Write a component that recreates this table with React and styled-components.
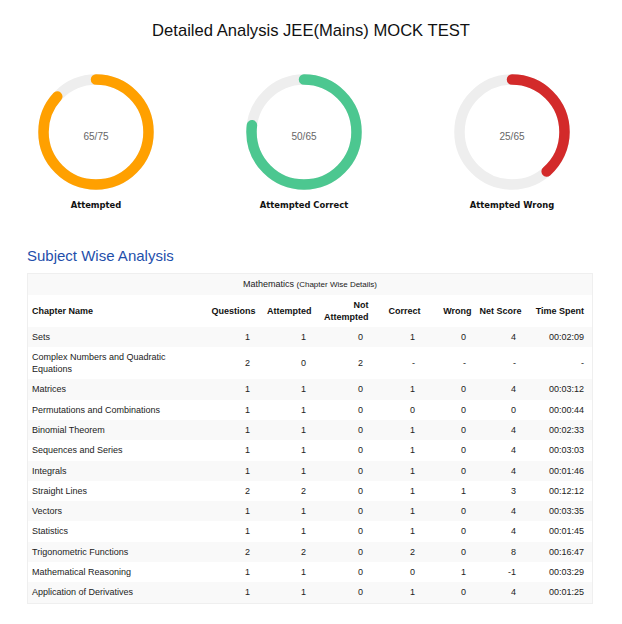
import React from "react";
import styled, { createGlobalStyle } from "styled-components";

const GlobalStyle = createGlobalStyle`
  html, body { margin: 0; padding: 0; background: #fff; }
  body { font-family: "Liberation Sans", Arial, Helvetica, sans-serif; color: #222; }
`;

const Page = styled.div`
  padding-top: 21px;
  padding-bottom: 20px;
`;

const Title = styled.h1`
  margin: 0;
  font-size: 16.6px;
  line-height: 20px;
  font-weight: normal;
  text-align: center;
  color: #111;
`;

const ChartRow = styled.div`
  display: flex;
  gap: 92px;
  padding-left: 38px;
  margin-top: 32.5px;
`;

const Figure = styled.div`
  width: 116px;
  display: flex;
  flex-direction: column;
  align-items: center;
`;

const RingWrap = styled.div`
  position: relative;
  width: 116px;
  height: 116px;
`;

const CenterText = styled.span`
  position: absolute;
  left: 0;
  right: 0;
  top: 50%;
  transform: translateY(calc(-50% + 5px));
  text-align: center;
  font-size: 10px;
  line-height: 12px;
  color: #666;
`;

const Label = styled.div`
  margin-top: 10px;
  font-family: "DejaVu Sans", Verdana, sans-serif;
  font-weight: bold;
  font-size: 8.4px;
  line-height: 11px;
  color: #111;
  white-space: nowrap;
`;

const Section = styled.section`
  padding: 0 30px 0 27px;
  margin-top: 36px;
`;

const Heading = styled.h2`
  margin: 0 0 8px;
  font-size: 15px;
  line-height: 18px;
  font-weight: normal;
  color: #1f4fab;
`;

const Table = styled.table`
  width: 100%;
  border-collapse: collapse;
  table-layout: fixed;
  border: 1px solid #efefef;
  font-size: 9px;
`;

const Col = styled.col`
  width: ${(p) => p.$w}px;
`;

const CaptionCell = styled.td`
  background: #f9f9f9;
  text-align: center;
  padding: 4px;
  line-height: 12px;
  color: #222;
`;

const Small = styled.small`
  font-size: 8px;
`;

const Th = styled.th`
  padding: 4px ${(p) => (p.$last ? 8 : 4)}px 4px ${(p) => (p.$align === "left" ? 4 : 1)}px;
  line-height: 12px;
  font-weight: bold;
  color: #111;
  text-align: ${(p) => p.$align || "right"};
  vertical-align: middle;
  background: #fff;
`;

const BodyRow = styled.tr`
  &:nth-child(odd) {
    background: #f9f9f9;
  }
`;

const Td = styled.td`
  padding: 4px ${(p) => (p.$name ? 4 : p.$last ? 8 : 9.5)}px 4px 4px;
  line-height: 12.3px;
  color: #222;
  text-align: ${(p) => (p.$name ? "left" : "right")};
  vertical-align: middle;
`;

const R = 52.5;
const C = 2 * Math.PI * R;

function Donut({ value, total, color, label }) {
  const len = (value / total) * C;
  return (
    <Figure>
      <RingWrap>
        <svg width="116" height="116" viewBox="0 0 116 116">
          <circle cx="58" cy="58" r={R} fill="none" stroke="#eeeeee" strokeWidth="10.5" />
          <circle
            cx="58"
            cy="58"
            r={R}
            fill="none"
            stroke={color}
            strokeWidth="10.5"
            strokeLinecap="round"
            strokeDasharray={`${len} ${C}`}
            transform="rotate(-90 58 58)"
          />
        </svg>
        <CenterText>
          {value}/{total}
        </CenterText>
      </RingWrap>
      <Label>{label}</Label>
    </Figure>
  );
}

const widths = [180, 52, 56, 57, 52, 51, 50, 67];
const headers = ["Questions", "Attempted", "Not Attempted", "Correct", "Wrong", "Net Score", "Time Spent"];

const rows = [
  ["Sets", "1", "1", "0", "1", "0", "4", "00:02:09"],
  ["Complex Numbers and Quadratic Equations", "2", "0", "2", "-", "-", "-", "-"],
  ["Matrices", "1", "1", "0", "1", "0", "4", "00:03:12"],
  ["Permutations and Combinations", "1", "1", "0", "0", "0", "0", "00:00:44"],
  ["Binomial Theorem", "1", "1", "0", "1", "0", "4", "00:02:33"],
  ["Sequences and Series", "1", "1", "0", "1", "0", "4", "00:03:03"],
  ["Integrals", "1", "1", "0", "1", "0", "4", "00:01:46"],
  ["Straight Lines", "2", "2", "0", "1", "1", "3", "00:12:12"],
  ["Vectors", "1", "1", "0", "1", "0", "4", "00:03:35"],
  ["Statistics", "1", "1", "0", "1", "0", "4", "00:01:45"],
  ["Trigonometric Functions", "2", "2", "0", "2", "0", "8", "00:16:47"],
  ["Mathematical Reasoning", "1", "1", "0", "0", "1", "-1", "00:03:29"],
  ["Application of Derivatives", "1", "1", "0", "1", "0", "4", "00:01:25"],
];

export default function App() {
  return (
    <Page>
      <GlobalStyle />
      <Title>Detailed Analysis JEE(Mains) MOCK TEST</Title>
      <ChartRow>
        <Donut value={65} total={75} color="#ffa000" label="Attempted" />
        <Donut value={50} total={65} color="#4cc790" label="Attempted Correct" />
        <Donut value={25} total={65} color="#d32a2a" label="Attempted Wrong" />
      </ChartRow>
      <Section>
        <Heading>Subject Wise Analysis</Heading>
        <Table>
          <colgroup>
            {widths.map((w, i) => (
              <Col key={i} $w={w} />
            ))}
          </colgroup>
          <thead>
            <tr>
              <CaptionCell colSpan={8}>
                Mathematics <Small>(Chapter Wise Details)</Small>
              </CaptionCell>
            </tr>
            <tr>
              <Th $align="left">Chapter Name</Th>
              {headers.map((h, i) => (
                <Th key={h} $last={i === headers.length - 1}>
                  {h}
                </Th>
              ))}
            </tr>
          </thead>
          <tbody>
            {rows.map((r) => (
              <BodyRow key={r[0]}>
                {r.map((c, i) => (
                  <Td key={i} $name={i === 0} $last={i === r.length - 1}>
                    {c}
                  </Td>
                ))}
              </BodyRow>
            ))}
          </tbody>
        </Table>
      </Section>
    </Page>
  );
}
